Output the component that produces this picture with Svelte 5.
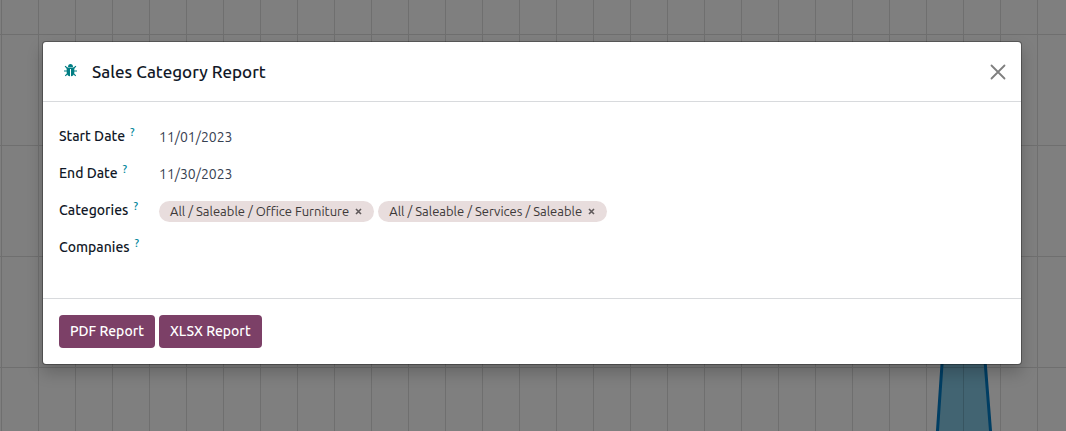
<script>
  let start = $state('11/01/2023');
  let end = $state('11/30/2023');
  let company = $state('');
  let categories = $state([
    'All / Saleable / Office Furniture',
    'All / Saleable / Services / Saleable'
  ]);

  function remove(name) {
    categories = categories.filter((c) => c !== name);
  }
</script>

{#snippet help()}<sup>?</sup>{/snippet}

<div class="page">
  <svg class="chart" width="160" height="96" viewBox="0 0 160 96" aria-hidden="true">
    <path d="M31.4 97 38 0H77L84.6 97Z" fill="#426472" />
    <path d="M57.500 0V96M36 32.500H80" stroke="#000" stroke-opacity=".14" />
    <path d="M31.4 97 38 0M77 0 84.6 97" fill="none" stroke="#003e63" stroke-width="3" />
  </svg>

  <div class="dialog" role="dialog" aria-labelledby="title">
    <header>
      <button class="debug" aria-label="Debug">
        <svg width="13" height="13" viewBox="0 0 13 13" aria-hidden="true">
          <path d="M4 3C4 1 5 0 6.500 0S9 1 9 3Z" fill="#017e84" />
          <path d="M2.700 3.500H10.300V8.500C10.300 11 8.800 12 7 12.200V5H6V12.200C4.200 12 2.700 11 2.700 8.500Z" fill="#017e84" />
          <path d="M3.500 4.500 1.100 2.100M9.500 4.500 11.900 2.100M3.200 7H0M9.800 7H13M3.700 9.300 1.300 11.800M9.300 9.300 11.700 11.800" fill="none" stroke="#017e84" stroke-width="1.200" />
        </svg>
      </button>
      <h1 id="title">Sales Category Report</h1>
      <button class="close" aria-label="Close">
        <svg width="16" height="16" viewBox="0 0 16 16" aria-hidden="true">
          <path d="M1.500 1.500 14.500 14.500M14.500 1.500 1.500 14.500" stroke="#7f7f7f" stroke-width="1.800" stroke-linecap="round" />
        </svg>
      </button>
    </header>

    <div class="body">
      <label for="start">Start Date{@render help()}</label>
      <input id="start" bind:value={start} />

      <label for="end">End Date{@render help()}</label>
      <input id="end" bind:value={end} />

      <label for="categories">Categories{@render help()}</label>
      <div class="tags">
        {#each categories as name (name)}
          <span class="tag">{name}<button aria-label="Remove {name}" onclick={() => remove(name)}>
            <svg width="7" height="7" viewBox="0 0 7 7" aria-hidden="true">
              <path d="M1 1 6 6M6 1 1 6" stroke="#5f595a" stroke-width="1.600" />
            </svg>
          </button></span>
        {/each}
        <input id="categories" />
      </div>

      <label for="companies">Companies{@render help()}</label>
      <input id="companies" bind:value={company} />
    </div>

    <footer>
      <button class="primary">PDF Report</button>
      <button class="primary">XLSX Report</button>
    </footer>
  </div>
</div>

<style>
  .page {
    position: relative;
    box-sizing: border-box;
    min-height: 100vh;
    padding: 41px 44px 41px 42px;
    overflow: hidden;
    font-family: "Ubuntu", "Noto Sans", sans-serif;
    font-size: 14px;
    color: #374151;
    background:
      linear-gradient(to right, #6f6f6f 1px, transparent 1px) 1px 0 / 37px 100%,
      linear-gradient(#6f6f6f 1px, transparent 1px) 0 34px / 100% 111px,
      #7f7f7f;
  }
  .chart {
    position: absolute;
    right: 0;
    bottom: 0;
  }
  .dialog {
    position: relative;
    box-sizing: border-box;
    max-width: 980px;
    margin: 0 auto;
    background: #fff;
    background-clip: padding-box;
    border: 1px solid rgba(0, 0, 0, 0.3);
    border-radius: 4px;
    box-shadow: 0 8px 16px rgba(0, 0, 0, 0.2);
  }
  button {
    font: inherit;
    cursor: pointer;
    border: 0;
    background: none;
  }
  button svg {
    display: block;
  }
  header {
    display: flex;
    align-items: center;
    height: 59px;
    padding: 0 14px 0 16px;
    border-bottom: 1px solid #d8dadd;
  }
  .debug {
    padding: 4px 5px 6px;
    margin-right: 10px;
  }
  h1 {
    flex: 1;
    margin: 0;
    font-size: 17px;
    line-height: 24px;
    font-weight: 500;
    color: #111827;
  }
  .close {
    padding: 1px;
  }
  .body {
    display: grid;
    grid-template-columns: 100px 1fr;
    grid-auto-rows: 37px;
    align-items: center;
    padding: 15px 16px 33px;
  }
  label {
    font-weight: 500;
    line-height: 20px;
    color: #111827;
  }
  sup {
    margin-left: 5px;
    font-size: 11px;
    line-height: 0;
    vertical-align: 5px;
    color: #01879b;
  }
  input {
    min-width: 0;
    padding: 2px 0 0;
    font: inherit;
    line-height: 20px;
    color: #374151;
    background: none;
    border: 0;
    outline: 0;
  }
  .tags {
    display: flex;
    gap: 4px;
    padding-top: 4px;
  }
  .tags input {
    flex: 1;
    padding: 0;
  }
  .tag {
    display: flex;
    align-items: center;
    padding: 0 12px 0 11px;
    font-size: 13px;
    line-height: 21px;
    white-space: nowrap;
    color: #3c3838;
    background: #e8dddd;
    border-radius: 11px;
  }
  .tag button {
    padding: 0;
    margin-left: 6px;
  }
  footer {
    display: flex;
    gap: 4px;
    padding: 16px;
    border-top: 1px solid #d8dadd;
  }
  .primary {
    padding: 6px 11px;
    line-height: 21px;
    font-weight: 500;
    color: #fff;
    background: #7c4067;
    border-radius: 4px;
  }
</style>
